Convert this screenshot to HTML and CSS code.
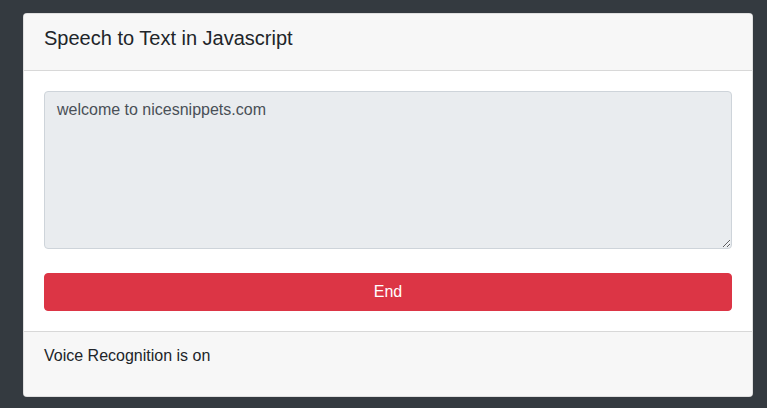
FILE: index.html
```html
<!DOCTYPE html>
<html lang="en">
<head>
<meta charset="utf-8">
<title>Speech to Text in Javascript</title>
<link rel="stylesheet" href="styles.css">
</head>
<body>
<div class="page">
  <div class="card">
    <div class="card-header">
      <h5 class="card-title">Speech to Text in Javascript</h5>
    </div>
    <div class="card-body">
      <textarea class="text-box" readonly>welcome to nicesnippets.com</textarea>
      <button class="btn-end" type="button">End</button>
    </div>
    <div class="card-footer">
      <p class="status">Voice Recognition is on</p>
    </div>
  </div>
</div>
</body>
</html>
```

FILE: styles.css
```css
* { box-sizing: border-box; }
html, body {
  margin: 0;
  height: 100%;
  background: #343a40;
  font-family: "Liberation Sans", Arial, sans-serif;
  font-size: 16px;
  line-height: 1.5;
  color: #212529;
}
.page {
  padding: 13px 14px 0 23px;
}
.card {
  display: flex;
  flex-direction: column;
  background: #fff;
  border: 1px solid rgba(0,0,0,.125);
  border-radius: 4px;
  overflow: hidden;
}
.card-header {
  background: #f7f7f7;
  padding: 12px 20px;
  border-bottom: 1px solid rgba(0,0,0,.125);
}
.card-title {
  margin: 0 0 8px;
  font-size: 20px;
  font-weight: 400;
  line-height: 1.2;
}
.card-body {
  padding: 20px;
  display: flex;
  flex-direction: column;
  gap: 24px;
}
.text-box {
  display: block;
  width: 100%;
  height: 158px;
  padding: 6px 12px;
  font-family: inherit;
  font-size: 16px;
  line-height: 1.5;
  color: #495057;
  background: #e9ecef;
  border: 1px solid #ced4da;
  border-radius: 4px;
  outline: none;
  resize: vertical;
  margin: 0;
}
.btn-end {
  display: block;
  width: 100%;
  height: 38px;
  padding: 6px 12px;
  font-family: inherit;
  font-size: 16px;
  line-height: 1.5;
  color: #fff;
  background: #dc3545;
  border: 1px solid #dc3545;
  border-radius: 4px;
  margin: 0;
}
.card-footer {
  background: #f7f7f7;
  padding: 12px 20px;
  border-top: 1px solid rgba(0,0,0,.125);
}
.status {
  margin: 0 0 16px;
}
```
